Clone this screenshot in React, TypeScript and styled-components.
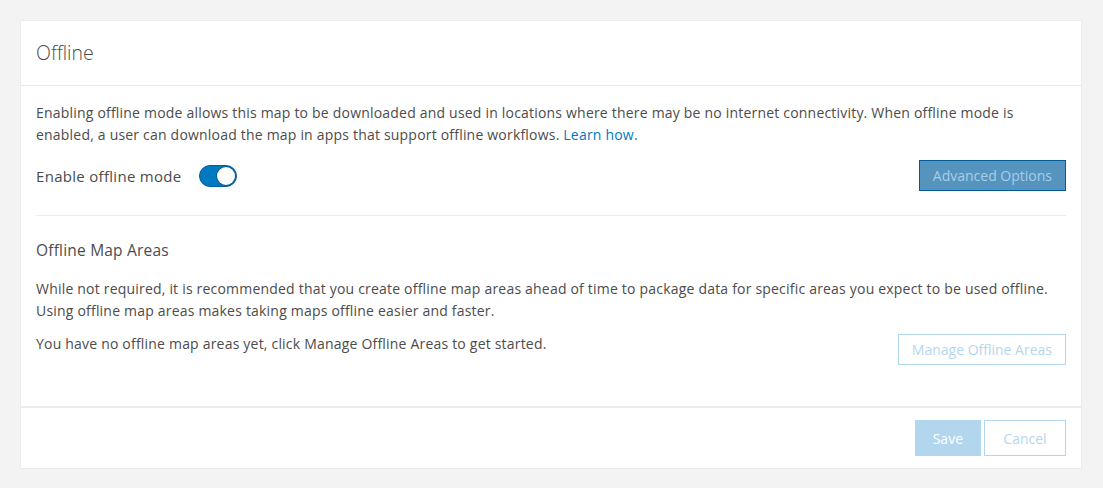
import React, { useState } from 'react';
import styled, { createGlobalStyle } from 'styled-components';

const GlobalStyle = createGlobalStyle`
  body {
    margin: 0;
    background: #f3f3f3;
    font-family: 'Open Sans', 'Lato', sans-serif;
    color: #4c4c4c;
  }
`;

const Page = styled.div`
  padding: 20px 21px 20px 20px;
`;

const Card = styled.div`
  background: #fff;
  border: 1px solid #ececec;
`;

const Header = styled.div`
  height: 64px;
  padding: 0 15px;
  display: flex;
  align-items: center;
  border-bottom: 1px solid #e8e8e8;
`;

const Title = styled.h2`
  margin: 0 0 2px;
  font-size: 19.5px;
  font-weight: 300;
  color: #4c4c4c;
`;

const Body = styled.div`
  padding: 16px 15px 41px;
  border-bottom: 2px solid #ececec;
`;

const Text = styled.p`
  margin: 0;
  font-size: 14px;
  line-height: 22px;
  letter-spacing: 0.2px;
`;

const Link = styled.a`
  color: #0079c1;
  text-decoration: none;
`;

const Row = styled.div<{ $top?: number; $align?: string }>`
  display: flex;
  align-items: ${p => p.$align ?? 'center'};
  justify-content: space-between;
  margin-top: ${p => p.$top ?? 0}px;
`;

const ToggleLabel = styled.label`
  display: flex;
  align-items: center;
  gap: 17px;
  font-size: 15px;
  letter-spacing: 0.3px;
`;

const Track = styled.span<{ $on: boolean }>`
  width: 38px;
  height: 22px;
  box-sizing: border-box;
  border-radius: 11px;
  background: ${p => (p.$on ? '#0079c1' : '#d4d4d4')};
  border: 1px solid ${p => (p.$on ? '#005e95' : '#bdbdbd')};
  display: flex;
  align-items: center;
  justify-content: ${p => (p.$on ? 'flex-end' : 'flex-start')};
  padding: 1px;
  cursor: pointer;
`;

const Knob = styled.span`
  width: 18px;
  height: 18px;
  border-radius: 50%;
  background: #fff;
  box-shadow: 0 0 0 1px #005e95;
`;

const Button = styled.button<{ $variant: 'solid' | 'dim' | 'outline'; $tall?: boolean }>`
  font-family: inherit;
  font-size: 14px;
  height: ${p => (p.$tall ? 36 : 31)}px;
  padding: 0 ${p => (p.$variant === 'dim' ? 17 : 13)}px;
  border: 1px solid ${p => (p.$variant === 'solid' ? '#005e95' : '#b2d6ee')};
  background: ${p => (p.$variant === 'solid' ? '#5594bf' : p.$variant === 'dim' ? '#b2d6ee' : '#fff')};
  color: ${p => (p.$variant === 'solid' ? '#a9cde6' : p.$variant === 'dim' ? '#fff' : '#b5d6ee')};
  cursor: default;
`;

const Divider = styled.hr`
  border: 0;
  border-top: 1px solid #ececec;
  margin: 24px 0 23px;
`;

const SubTitle = styled.h3`
  margin: 0 0 17px;
  font-size: 15.5px;
  font-weight: 400;
  letter-spacing: 0.2px;
`;

const Footer = styled.div`
  height: 60px;
  padding: 0 15px;
  display: flex;
  align-items: center;
  justify-content: flex-end;
  gap: 3px;
`;

export default function App() {
  const [offline, setOffline] = useState(true);

  return (
    <>
      <GlobalStyle />
      <Page>
        <Card>
          <Header>
            <Title>Offline</Title>
          </Header>
          <Body>
            <Text>
              Enabling offline mode allows this map to be downloaded and used in locations where there may be no
              internet connectivity. When offline mode is enabled, a user can download the map in apps that support
              offline workflows. <Link href="#">Learn how.</Link>
            </Text>
            <Row $top={14}>
              <ToggleLabel>
                Enable offline mode
                <Track $on={offline} onClick={() => setOffline(!offline)}>
                  <Knob />
                </Track>
              </ToggleLabel>
              <Button $variant="solid">Advanced Options</Button>
            </Row>
            <Divider />
            <SubTitle>Offline Map Areas</SubTitle>
            <Text>
              While not required, it is recommended that you create offline map areas ahead of time to package data
              for specific areas you expect to be used offline. Using offline map areas makes taking maps offline
              easier and faster.
            </Text>
            <Row $top={11} $align="flex-start">
              <Text>You have no offline map areas yet, click Manage Offline Areas to get started.</Text>
              <Button $variant="outline" style={{ marginTop: 1 }}>
                Manage Offline Areas
              </Button>
            </Row>
          </Body>
          <Footer>
            <Button $variant="dim" $tall>
              Save
            </Button>
            <Button $variant="outline" $tall style={{ width: 82 }}>
              Cancel
            </Button>
          </Footer>
        </Card>
      </Page>
    </>
  );
}
